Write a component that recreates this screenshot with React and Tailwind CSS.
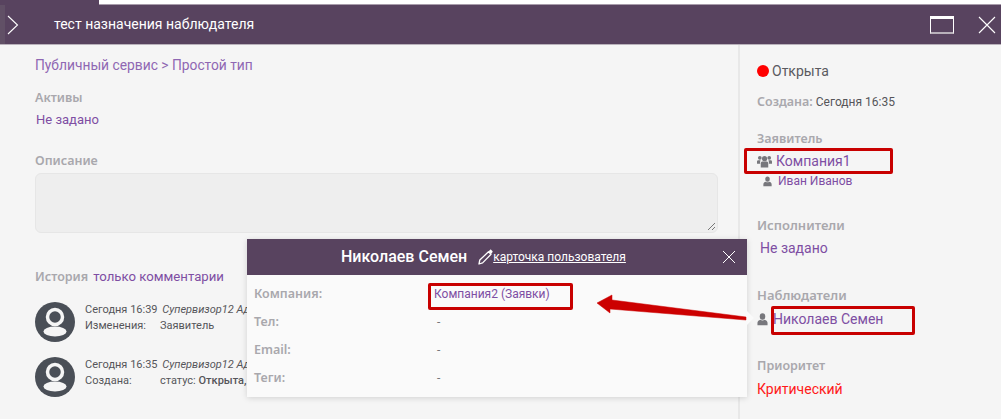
const labelBase = "font-['Noto_Sans',sans-serif] font-semibold leading-[18px] text-[#a9a8ad]";
const labelCls = `${labelBase} text-[12.5px]`;
const linkCls = "text-[#7e4ea3]";

function UserAvatar() {
  return (
    <svg width="40" height="40" viewBox="0 0 40 40" className="shrink-0">
      <circle cx="20" cy="20" r="20" fill="#4a4f57" />
      <circle cx="20" cy="15" r="7.5" fill="none" stroke="#f5f5f5" strokeWidth="3.5" />
      <ellipse cx="20" cy="29.5" rx="11.5" ry="5" fill="#f5f5f5" />
    </svg>
  );
}

function PersonIcon({ className }) {
  return (
    <svg viewBox="0 0 12 14" className={className} fill="#77777c">
      <ellipse cx="6" cy="3.8" rx="3" ry="3.6" />
      <path d="M0.5 13.2V10.6C0.5 8.6 2.2 7.6 3.6 7.2C5 8.4 7 8.4 8.4 7.2C9.8 7.6 11.5 8.6 11.5 10.6V13.2Z" />
    </svg>
  );
}

function GroupIcon() {
  return (
    <svg viewBox="0 0 16 13" className="w-[15px] h-[13px]" fill="#77777c">
      <circle cx="3" cy="2.6" r="2" />
      <circle cx="13" cy="2.6" r="2" />
      <circle cx="8" cy="3.5" r="2.8" />
      <path d="M0 9V6.6C0 5.6.8 5.2 1.6 5.2H3.8C3.4 6 3.2 7.4 3.3 9Z" />
      <path d="M16 9V6.6C16 5.6 15.2 5.2 14.4 5.2H12.2C12.6 6 12.8 7.4 12.7 9Z" />
      <path d="M4 13V8.6C4 7.2 5 6.6 6 6.6H10C11 6.6 12 7.2 12 8.6V13Z" />
    </svg>
  );
}

function HistoryRow({ time, kind, children }) {
  return (
    <div className="flex gap-[10px] h-[39px] items-start mb-[16px]">
      <UserAvatar />
      <div className="text-[11px] leading-[16px] text-[#55555a] whitespace-nowrap">
        <div>
          {time} <i className="ml-[2px]">Супервизор12 Админ</i>
        </div>
        <div className="flex">
          <span className="w-[75px]">{kind}</span>
          <span>{children}</span>
        </div>
      </div>
    </div>
  );
}

function PopupRow({ label, children }) {
  return (
    <div className="flex h-[28px] items-center">
      <span className={`${labelCls} w-[180px]`}>{label}</span>
      {children}
    </div>
  );
}

export default function App() {
  return (
    <div className="relative w-[1001px] h-[419px] overflow-hidden bg-[#f5f5f5] font-['Roboto',sans-serif]">
      <div className="flex h-[5px]">
        <div className="w-[99px] bg-[#58435f]" />
        <div className="flex-1 bg-white border-b border-[#a89cab]" />
      </div>
      <div className="h-[40px] bg-[#58435f] border-b border-[#b9b2bb] flex items-center relative">
        <div className="w-[5px] self-stretch bg-[#615066]" />
        <svg width="12" height="20" viewBox="0 0 12 20" className="ml-[2px]" fill="none" stroke="#fff" strokeWidth="1.1">
          <path d="M1 1L10.5 10L1 19" />
        </svg>
        <span className="ml-[35px] text-white text-[14px]">тест назначения наблюдателя</span>
        <div className="ml-auto flex items-center mr-[5px] gap-[24px]">
          <div className="w-[24px] h-[18px] border border-white border-t-[3px] border-b-[#b8b0ba] border-b-2" />
          <svg width="18" height="18" viewBox="0 0 18 18" stroke="#fff" strokeWidth="1.1">
            <path d="M1 1L17 17M17 1L1 17" />
          </svg>
        </div>
      </div>

      <div className="flex h-[374px]">
        <div className="w-[738px] pl-[35px] pr-[20px] pt-[12px]">
          <div className="text-[13.8px] leading-[17px] text-[#8f67b3]">Публичный сервис &gt; Простой тип</div>
          <div className={`${labelCls} mt-[15px]`}>Активы</div>
          <div className={`text-[13px] leading-[18px] ml-[1px] mt-[4px] ${linkCls}`}>Не задано</div>
          <div className={`${labelCls} mt-[23px]`}>Описание</div>
          <div className="mt-[3px] h-[60px] w-[683px] rounded-[6px] bg-[#eeeeee] border border-[#e6e6e6] relative">
            <svg width="9" height="9" viewBox="0 0 9 9" className="absolute right-[1px] bottom-[1px]" stroke="#777" strokeWidth="1">
              <path d="M8 1L1 8M8 5L5 8" />
            </svg>
          </div>
          <div className="mt-[35px] flex items-center gap-[5px] whitespace-nowrap">
            <span className={labelCls}>История</span>
            <span className={`text-[13.2px] leading-[18px] ${linkCls}`}>только комментарии</span>
          </div>
          <div className="mt-[16px]">
            <HistoryRow time="Сегодня 16:39" kind="Изменения:">
              Заявитель
            </HistoryRow>
            <HistoryRow time="Сегодня 16:35" kind="Создана:">
              статус: <b className="font-medium">Открыта,</b>
            </HistoryRow>
          </div>
        </div>

        <div className="flex-1 border-l-2 border-[#e8e8e8] pl-[17px] pt-[16px]">
          <div className="flex items-center gap-[3px] text-[14px] leading-[20px] text-[#5a5a5f]">
            <span className="w-[12px] h-[12px] rounded-full bg-[#ff0000]" />
            Открыта
          </div>
          <div className="mt-[12px] text-[12px] leading-[18px] text-[#55555a] flex gap-[3px]">
            <span className={labelCls}>Создана:</span>
            <span>Сегодня 16:35</span>
          </div>
          <div className={`${labelCls} mt-[19px]`}>Заявитель</div>
          <div className={`mt-[4px] flex items-center gap-[4px] text-[14px] leading-[18px] ${linkCls}`}>
            <GroupIcon />
            Компания1
          </div>
          <div className={`mt-[4px] ml-[6px] flex items-center gap-[6px] text-[12px] leading-[15px] ${linkCls}`}>
            <PersonIcon className="w-[9px] h-[11px]" />
            Иван Иванов
          </div>
          <div className={`${labelBase} text-[13px] mt-[27px]`}>Исполнители</div>
          <div className={`mt-[5px] ml-[3px] text-[14px] leading-[18px] ${linkCls}`}>Не задано</div>
          <div className={`${labelBase} text-[13px] mt-[29px]`}>Наблюдатели</div>
          <div className={`mt-[5px] flex items-center gap-[5px] text-[14px] leading-[20px] ${linkCls}`}>
            <PersonIcon className="w-[11px] h-[13px]" />
            Николаев Семен
          </div>
          <div className={`${labelCls} mt-[28px]`}>Приоритет</div>
          <div className="mt-[5px] text-[14px] leading-[18px] text-[#ff1a1a]">Критический</div>
        </div>
      </div>

      {/* popup over the page */}
      <div className="absolute left-[247px] top-[239px] w-[500px] h-[158px] bg-[#fafafa] shadow-[0_1px_6px_rgba(0,0,0,0.15)]">
        <div className="h-[36px] bg-[#58435f] flex items-center text-white relative pl-[94px]">
          <span className="text-[16px] font-medium">Николаев Семен</span>
          <svg width="15" height="16" viewBox="0 0 15 16" className="ml-[11px]">
            <path d="M1 15L1.8 11L10.5 2.8L13 5.3L4.6 13.9Z" fill="none" stroke="#fff" strokeWidth="1.3" strokeLinejoin="round" />
            <path d="M10.6 2.2L12 0.9C12.4 0.5 12.9 0.5 13.3 0.9L14.4 2C14.8 2.4 14.8 2.9 14.4 3.3L13.2 4.7Z" fill="#fff" />
          </svg>
          <span className="text-[12px] underline">карточка пользователя</span>
          <svg width="14" height="14" viewBox="0 0 14 14" className="absolute right-[11px] top-[11px]" stroke="#fff" strokeWidth="1">
            <path d="M1 1L13 13M13 1L1 13" />
          </svg>
        </div>
        <div className="pl-[7px] pt-[5px]">
          <PopupRow label="Компания:">
            <span className="text-[12px] text-[#7e4ea3]">Компания2 (Заявки)</span>
          </PopupRow>
          <PopupRow label="Тел:">
            <span className="ml-[3px] text-[12px] text-[#77777c]">-</span>
          </PopupRow>
          <PopupRow label="Email:">
            <span className="ml-[3px] text-[12px] text-[#77777c]">-</span>
          </PopupRow>
          <PopupRow label="Теги:">
            <span className="ml-[3px] text-[12px] text-[#77777c]">-</span>
          </PopupRow>
        </div>
        <svg width="8" height="14" viewBox="0 0 8 14" className="absolute left-full top-[72px]" fill="#fafafa">
          <path d="M0 0L7 7L0 14Z" />
        </svg>
      </div>

      {/* red annotations */}
      <div className="absolute left-[744px] top-[148px] w-[149px] h-[26px] border-[3px] border-[#c80000] rounded-[2px]" />
      <div className="absolute left-[771px] top-[306px] w-[144px] h-[29px] border-[3px] border-[#c80000] rounded-[2px]" />
      <div className="absolute left-[428px] top-[283px] w-[145px] h-[27px] border-[3px] border-[#c80000] rounded-[2px]" />
      <svg width="160" height="30" viewBox="0 0 160 30" className="absolute left-[595px] top-[293px]">
        <path d="M2 10L17 2L17 7L151 24L151 27L15 16L15 20Z" fill="#cc0000" stroke="#cc0000" strokeWidth="0.5" strokeLinejoin="round" />
      </svg>
    </div>
  );
}
